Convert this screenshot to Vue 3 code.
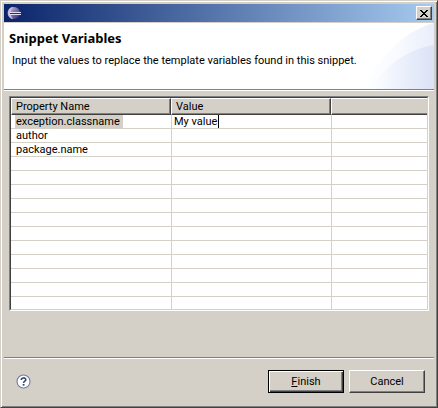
<script setup>
import { ref } from 'vue'

const columns = ['Property Name', 'Value', '']
const names = ['exception.classname', 'author', 'package.name']
const rows = Array.from({ length: 14 }, (_, i) => names[i] ?? '')
const value = ref('My value')
</script>

<template>
  <main class="dialog">
    <div class="titlebar">
      <svg class="logo" viewBox="0 0 16 16" aria-hidden="true">
        <defs>
          <linearGradient id="orb" x1="0" y1="0" x2="1" y2="1">
            <stop offset="0" stop-color="#d8cce8" />
            <stop offset="0.4" stop-color="#8c7cb8" />
            <stop offset="1" stop-color="#2c2468" />
          </linearGradient>
        </defs>
        <circle cx="8" cy="8" r="6" fill="url(#orb)" />
        <path d="M6.5 2.2A6 6 0 0 0 6.5 13.8A9 9 0 0 1 6.5 2.2Z" fill="#c8bcdc" stroke="#c8bcdc" stroke-width="0.6" />
        <path d="M4 8.5H15" stroke="#2c2c70" stroke-width="1" />
        <path d="M3.5 7.5H15M3.5 9.5H15" stroke="#e0e0f4" stroke-width="1" />
      </svg>
      <button class="close" type="button" aria-label="Close">
        <svg viewBox="0 0 8 7" aria-hidden="true" shape-rendering="crispEdges">
          <path d="M0 0h2v1h1v1h2v-1h1v-1h2v1h-1v1h-1v1h-1v1h1v1h1v1h1v1h-2v-1h-1v-1h-2v1h-1v1h-2v-1h1v-1h1v-1h1v-1h-1v-1h-1v-1h-1z" fill="#000" />
        </svg>
      </button>
    </div>

    <header class="banner">
      <svg class="swoosh" viewBox="0 0 76 66" aria-hidden="true">
        <defs>
          <linearGradient id="outer" x1="0" y1="0" x2="1" y2="0">
            <stop offset="0" stop-color="#fff" />
            <stop offset="0.5" stop-color="#f8fafe" />
            <stop offset="1" stop-color="#e8eefa" />
          </linearGradient>
          <linearGradient id="inner" x1="0" y1="0" x2="1" y2="0">
            <stop offset="0" stop-color="#fff" />
            <stop offset="0.4" stop-color="#eff3fc" />
            <stop offset="1" stop-color="#dae2f6" />
          </linearGradient>
        </defs>
        <path d="M76 0C48 8 28 26 4 66H76Z" fill="url(#outer)" />
        <path d="M76 22C50 26 28 42 12 66H76Z" fill="url(#inner)" />
      </svg>
      <h1>Snippet Variables</h1>
      <p>Input the values to replace the template variables found in this snippet.</p>
    </header>

    <section class="body">
      <div class="pane">
        <table>
          <colgroup>
            <col class="fixed" />
            <col class="fixed" />
            <col />
          </colgroup>
          <thead>
            <tr>
              <th v-for="(c, i) in columns" :key="i" scope="col">{{ c }}</th>
            </tr>
          </thead>
          <tbody>
            <tr v-for="(name, i) in rows" :key="i">
              <td><span v-if="name" class="name" :class="{ selected: i === 0 }">{{ name }}</span></td>
              <td>
                <div v-if="i === 0" class="editor">
                  <input v-model="value" type="text" aria-label="exception.classname value" />
                  <span class="caret"></span>
                </div>
              </td>
              <td></td>
            </tr>
          </tbody>
        </table>
      </div>
    </section>

    <footer class="actions">
      <button class="help" type="button" aria-label="Help">
        <svg viewBox="0 0 15 15" aria-hidden="true">
          <circle cx="7.5" cy="7.5" r="6.5" fill="#fff" stroke="#6c7ea4" stroke-width="1.1" />
          <path d="M5.3 5.9C5.3 3.3 9.8 3.3 9.8 5.7C9.8 7.2 7.6 7.2 7.6 9" fill="none" stroke="#34486c" stroke-width="1.6" />
          <path d="M6.7 10h1.8v1.7h-1.8z" fill="#34486c" />
        </svg>
      </button>
      <button class="push default" type="button"><u>F</u>inish</button>
      <button class="push" type="button">Cancel</button>
    </footer>
  </main>
</template>

<style>
body {
  margin: 0;
  background: #d4d0c8;
}
</style>

<style scoped>
.dialog {
  box-sizing: border-box;
  min-height: 100vh;
  display: flex;
  flex-direction: column;
  padding: 3px 3px 1px;
  border: 1px solid;
  border-color: #d4d0c8 #404040 #404040 #d4d0c8;
  box-shadow: inset 1px 1px #fff, inset -1px -1px #808080;
  background: #d4d0c8;
  color: #000;
  font-family: Tahoma, Roboto, sans-serif;
  font-size: 11px;
  line-height: 14px;
}
button,
input {
  font: inherit;
  color: inherit;
  padding: 0;
  margin: 0;
}
.titlebar {
  display: flex;
  align-items: center;
  justify-content: space-between;
  height: 18px;
  padding: 0 2px;
  background: linear-gradient(90deg, #0a246a, #a6caf0);
}
.logo {
  width: 16px;
  height: 16px;
}
.close {
  display: flex;
  align-items: center;
  justify-content: center;
  box-sizing: border-box;
  width: 16px;
  height: 14px;
  border: 1px solid;
  border-color: #fff #404040 #404040 #fff;
  box-shadow: inset -1px -1px #808080;
  background: #d4d0c8;
}
.close svg {
  width: 8px;
  height: 7px;
}
.banner {
  position: relative;
  box-sizing: border-box;
  height: 69px;
  padding: 7px 8px 0 5px;
  border-top: 1px solid #d4d0c8;
  border-bottom: 1px solid #fff;
  box-shadow: inset 0 -1px #808080;
  background: #fff;
}
.swoosh {
  position: absolute;
  top: 0;
  right: 0;
  width: 76px;
  height: 66px;
}
.banner h1 {
  position: relative;
  margin: 0;
  font-family: Tahoma, "Noto Sans", sans-serif;
  font-size: 13px;
  line-height: 16px;
}
.banner p {
  position: relative;
  margin: 8px 0 0 3px;
}
.body {
  flex: 1;
  padding: 5px 5px 46px;
}
.pane {
  border: 1px solid;
  border-color: #808080 #fff #fff #808080;
}
table {
  width: 100%;
  table-layout: fixed;
  border-collapse: separate;
  border-spacing: 0;
  border: 1px solid;
  border-color: #404040 #d4d0c8 #d4d0c8 #404040;
  background: #fff;
}
.fixed {
  width: 160px;
}
th {
  box-sizing: border-box;
  height: 17px;
  padding: 1px 4px 0;
  border: 1px solid;
  border-color: #fff #404040 #404040 #fff;
  box-shadow: inset -1px -1px #808080;
  background: #d4d0c8;
  font-weight: normal;
  text-align: left;
}
th:last-child {
  border-right: 0;
  box-shadow: inset 0 -1px #808080;
}
td {
  box-sizing: border-box;
  height: 14px;
  padding: 0;
  border-bottom: 1px solid #d4d0c8;
  line-height: 12px;
}
td + td {
  border-left: 1px solid #d4d0c8;
}
tr:last-child td {
  height: 12px;
  border-bottom: 0;
}
.name {
  display: block;
  width: 107px;
  margin-left: 4px;
  padding: 1px 0 0 1px;
}
.selected {
  background: #d4d0c8;
}
.editor {
  display: flex;
  height: 13px;
  padding-left: 2px;
}
.editor input {
  box-sizing: border-box;
  width: 44px;
  padding-top: 1px;
  border: 0;
  outline: 0;
  background: none;
}
.caret {
  width: 1px;
  background: #000;
}
.actions {
  display: flex;
  align-items: center;
  gap: 5px;
  padding: 12px 9px 13px 12px;
  border-top: 1px solid #808080;
  box-shadow: inset 0 1px #fff;
}
.help {
  display: flex;
  margin-right: auto;
  border: 0;
  background: none;
}
.help svg {
  width: 15px;
  height: 15px;
}
.push {
  box-sizing: border-box;
  width: 76px;
  height: 23px;
  border: 1px solid;
  border-color: #fff #404040 #404040 #fff;
  box-shadow: inset -1px -1px #808080;
  background: #d4d0c8;
}
.default {
  border-color: #000;
  box-shadow: inset 1px 1px #fff, inset -1px -1px #404040, inset -2px -2px #808080;
}
</style>
